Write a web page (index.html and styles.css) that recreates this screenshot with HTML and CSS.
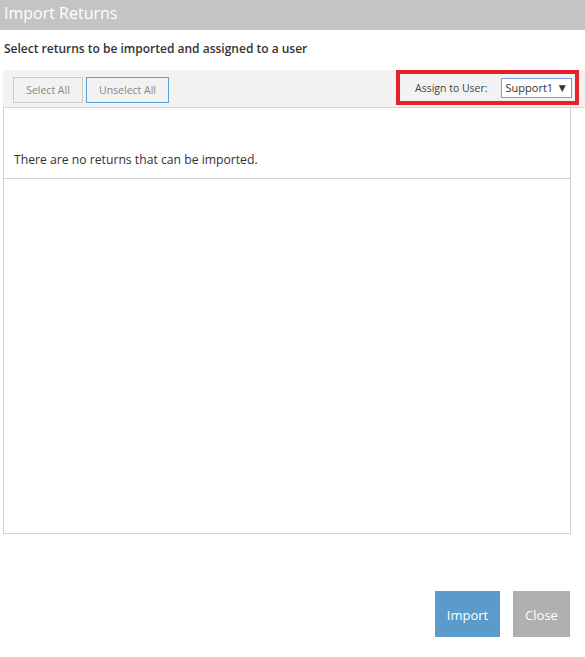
FILE: index.html
```html
<!DOCTYPE html>
<html>
<head>
<meta charset="utf-8">
<link rel="stylesheet" href="styles.css">
</head>
<body>
<div class="dialog">
  <div class="titlebar">Import Returns</div>
  <div class="subtitle">Select returns to be imported and assigned to a user</div>
  <div class="toolbar">
    <div class="btns">
      <button class="tbtn">Select All</button>
      <button class="tbtn active">Unselect All</button>
    </div>
    <div class="assign">
      <span class="assign-label">Assign to User:</span>
      <span class="select">Support1 <span class="caret">&#9660;</span></span>
    </div>
  </div>
  <div class="panel">
    <div class="empty">There are no returns that can be imported.</div>
    <div class="list"></div>
  </div>
  <div class="footer">
    <button class="fbtn import">Import</button>
    <button class="fbtn close">Close</button>
  </div>
</div>
</body>
</html>
```
FILE: styles.css
```css
html, body { margin: 0; padding: 0; background: #fff; }
body { font-family: "Open Sans", "DejaVu Sans", sans-serif; color: #333; width: 585px; }
.dialog { display: flex; flex-direction: column; }
.titlebar { height: 30px; background: #c4c4c4; color: #fff; font-size: 16px; line-height: 26px; padding-left: 4px; }
.subtitle { font-size: 12px; font-weight: 600; color: #333; padding: 10px 0 0 4px; height: 40px; box-sizing: border-box; }
.toolbar { height: 38px; margin-left: 3px; background: #f2f2f2; display: flex; justify-content: space-between; align-items: flex-start; padding-top: 0; border-bottom: 1px solid #d6d6d6; box-sizing: border-box; }
.btns { display: flex; gap: 3px; padding-left: 10px; padding-top: 7px; }
.tbtn { height: 26px; width: 70px; font-family: inherit; font-size: 10.5px; color: #888; background: #f2f2f2; border: 1px solid #ccc; padding: 0; margin: 0; }
.tbtn.active { border-color: #5aa0d0; width: 83px; }
.assign { display: flex; align-items: center; border: 4px solid #e5212b; height: 35px; box-sizing: border-box; width: 183px; margin-right: 6px; padding-left: 15px; gap: 13px; }
.assign-label { font-size: 10.5px; color: #444; }
.select { font-size: 11px; color: #333; border: 1px solid #7b9fd9; height: 20px; box-sizing: border-box; width: 71px; display: flex; align-items: center; justify-content: space-between; padding: 0 5px 0 4px; background: #fff; }
.caret { font-size: 9px; color: #333; }
.panel { margin-left: 3px; width: 568px; height: 426px; border: 1px solid #d0d0d0; border-top: none; box-sizing: border-box; display: flex; flex-direction: column; }
.empty { height: 71px; border-bottom: 1px solid #d0d0d0; box-sizing: border-box; font-size: 12.2px; color: #333; padding: 43px 0 0 10px; }
.list { flex: 1; }
.footer { display: flex; justify-content: flex-end; gap: 13px; padding: 57px 15px 0 0; }
.fbtn { height: 46px; border: none; color: #fff; font-family: inherit; font-size: 13px; margin: 0; padding-top: 2px; }
.import { background: #5a9bcb; width: 65px; }
.close { background: #b0b0b0; width: 57px; }
```
